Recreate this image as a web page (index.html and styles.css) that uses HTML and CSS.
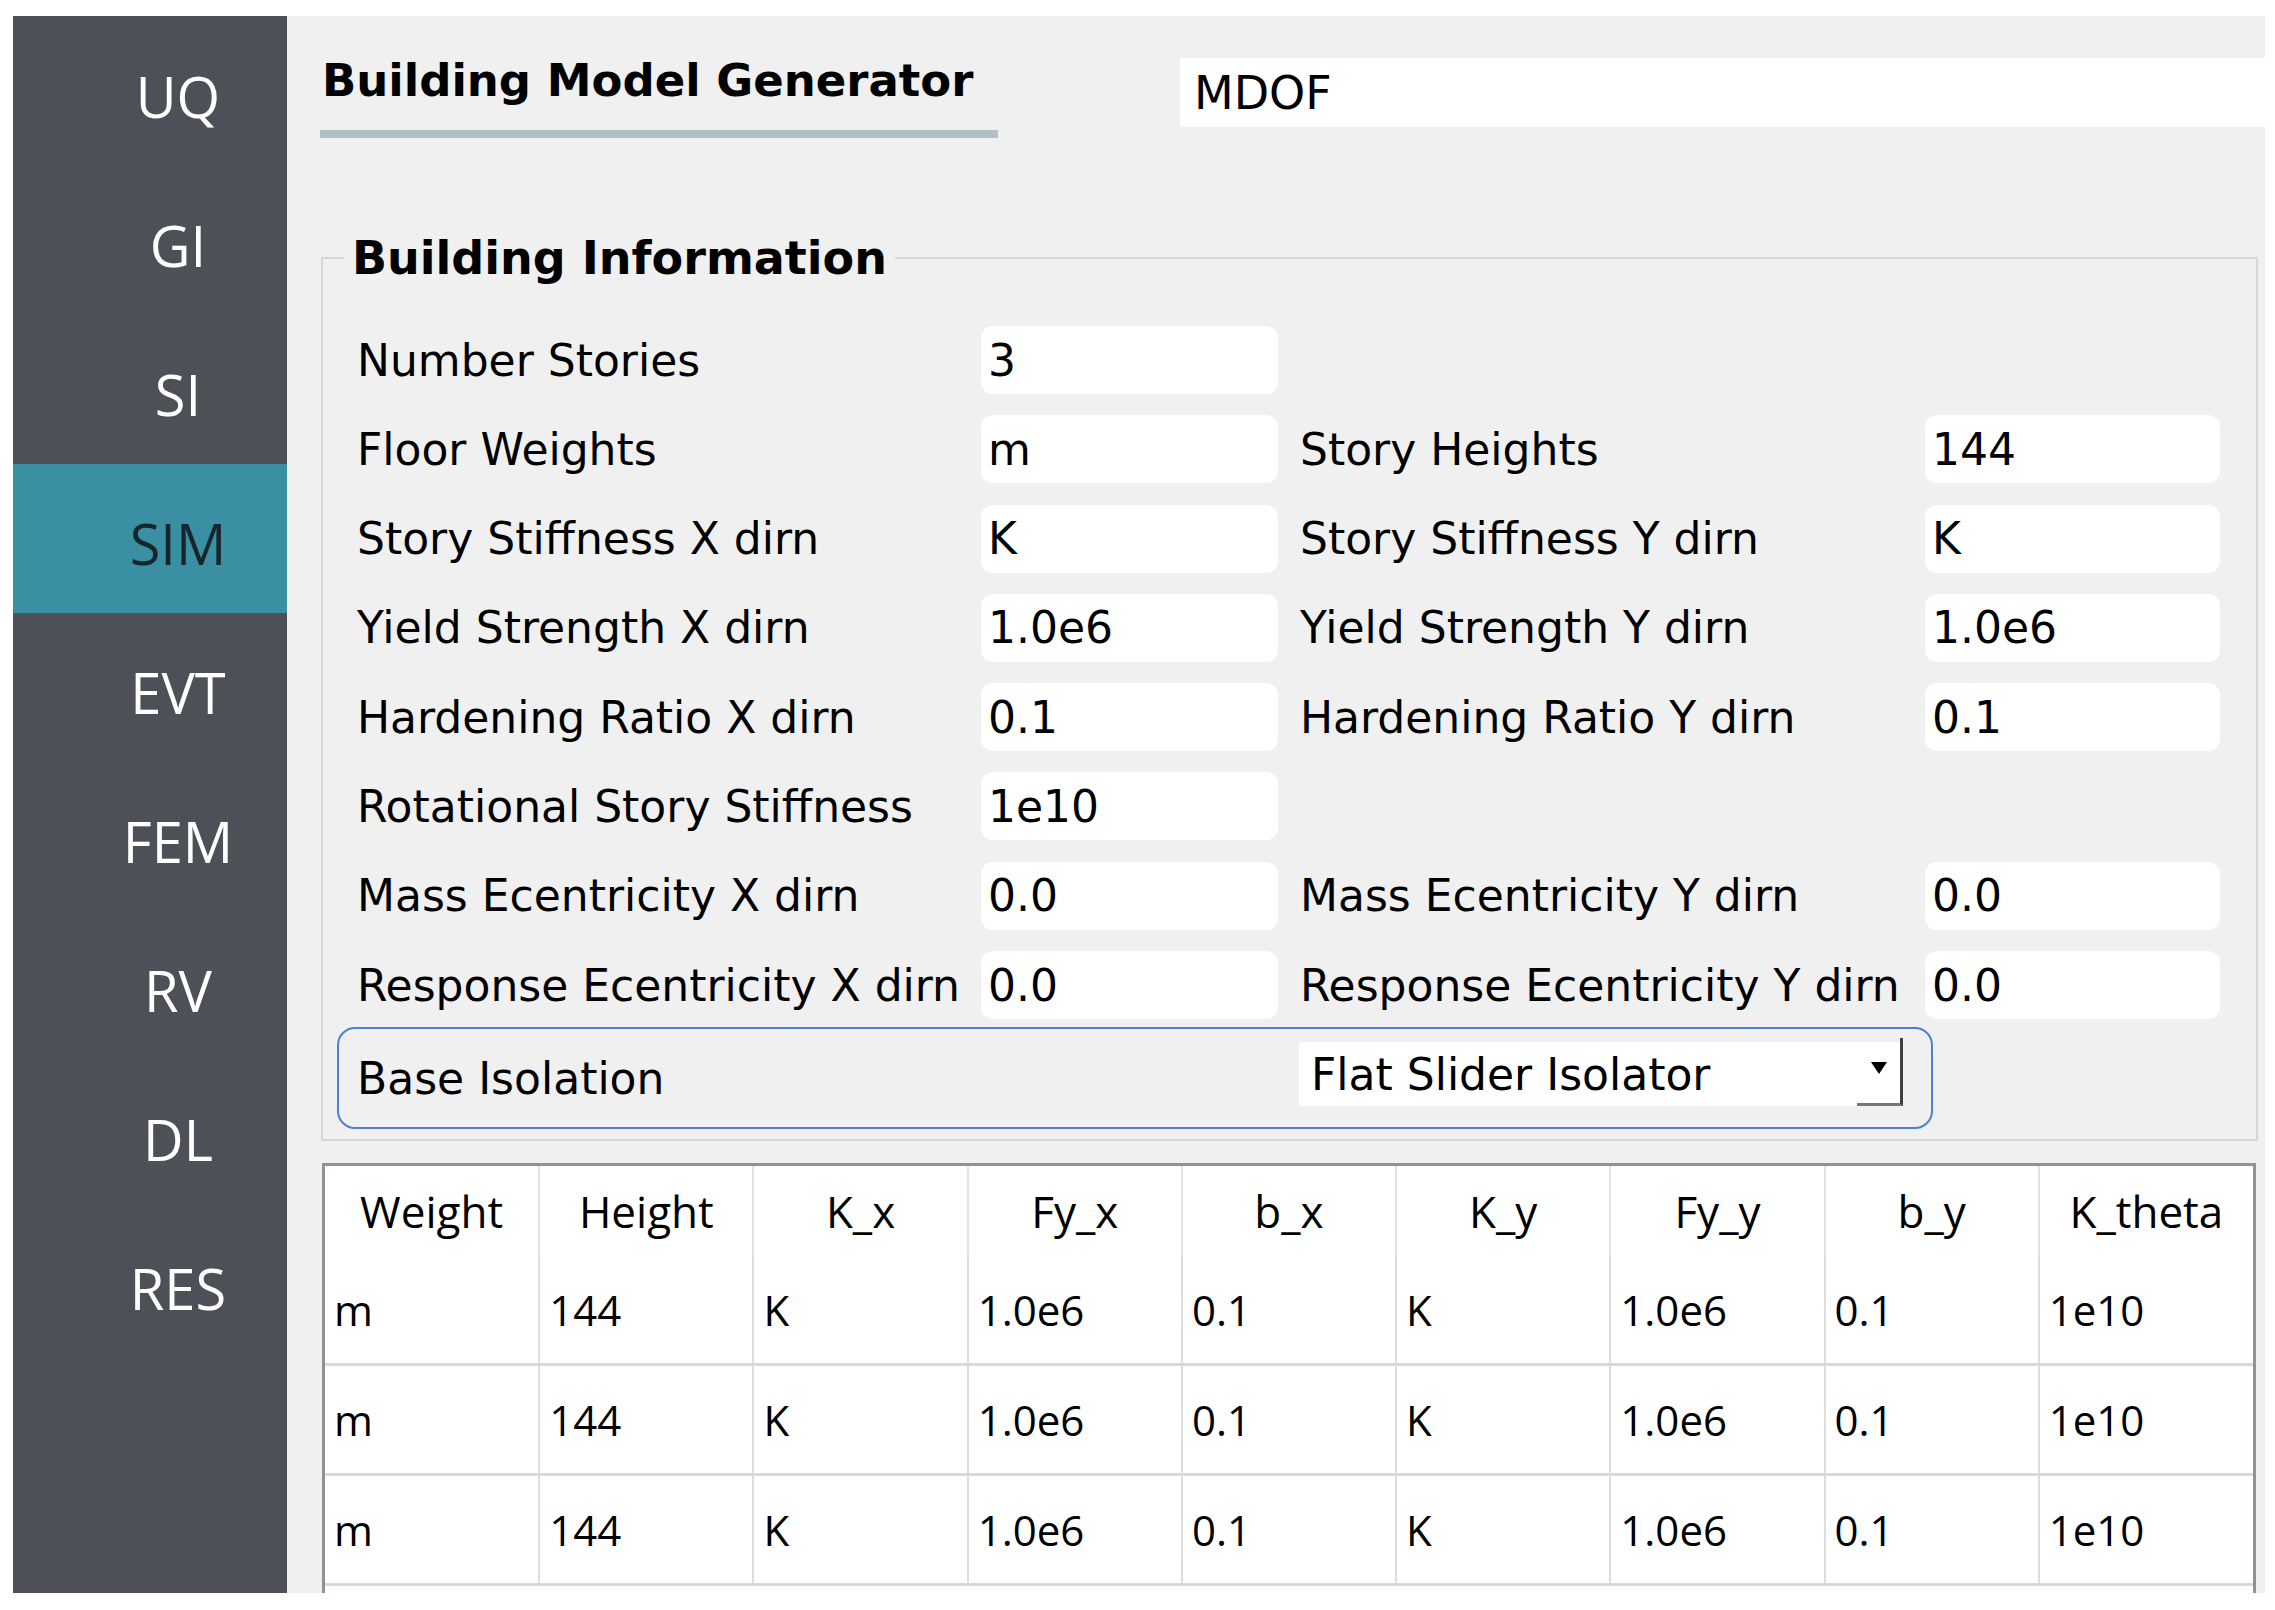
FILE: index.html
```html
<!DOCTYPE html>
<html lang="en">
<head>
<meta charset="utf-8">
<title>Building Model Generator</title>
<link rel="stylesheet" href="styles.css">
</head>
<body>
<div class="app">
  <nav class="sidebar">
    <div class="nav-item">UQ</div>
    <div class="nav-item">GI</div>
    <div class="nav-item">SI</div>
    <div class="nav-item active">SIM</div>
    <div class="nav-item">EVT</div>
    <div class="nav-item">FEM</div>
    <div class="nav-item">RV</div>
    <div class="nav-item">DL</div>
    <div class="nav-item">RES</div>
  </nav>
  <main class="main">
    <header class="top">
      <div class="title">Building Model Generator</div>
      <div class="selector">MDOF</div>
    </header>
    <fieldset class="group">
      <legend class="group-title">Building Information</legend>
      <div class="form">
        <span class="label">Number Stories</span><span class="field">3</span><span class="label right"></span><span></span>
        <span class="label">Floor Weights</span><span class="field">m</span><span class="label right">Story Heights</span><span class="field">144</span>
        <span class="label">Story Stiffness X dirn</span><span class="field">K</span><span class="label right">Story Stiffness Y dirn</span><span class="field">K</span>
        <span class="label">Yield Strength X dirn</span><span class="field">1.0e6</span><span class="label right">Yield Strength Y dirn</span><span class="field">1.0e6</span>
        <span class="label">Hardening Ratio X dirn</span><span class="field">0.1</span><span class="label right">Hardening Ratio Y dirn</span><span class="field">0.1</span>
        <span class="label">Rotational Story Stiffness</span><span class="field">1e10</span><span class="label right"></span><span></span>
        <span class="label">Mass Ecentricity X dirn</span><span class="field">0.0</span><span class="label right">Mass Ecentricity Y dirn</span><span class="field">0.0</span>
        <span class="label">Response Ecentricity X dirn</span><span class="field">0.0</span><span class="label right">Response Ecentricity Y dirn</span><span class="field">0.0</span>
      </div>
      <div class="iso">
        <span class="iso-label">Base Isolation</span>
        <div class="combo">
          <span class="combo-text">Flat Slider Isolator</span>
          <span class="drop"><span class="arrow"></span></span>
        </div>
      </div>
    </fieldset>
    <div class="table-wrap">
      <table class="grid">
        <thead>
          <tr><th>Weight</th><th>Height</th><th>K_x</th><th>Fy_x</th><th>b_x</th><th>K_y</th><th>Fy_y</th><th>b_y</th><th>K_theta</th></tr>
        </thead>
        <tbody>
          <tr><td>m</td><td>144</td><td>K</td><td>1.0e6</td><td>0.1</td><td>K</td><td>1.0e6</td><td>0.1</td><td>1e10</td></tr>
          <tr><td>m</td><td>144</td><td>K</td><td>1.0e6</td><td>0.1</td><td>K</td><td>1.0e6</td><td>0.1</td><td>1e10</td></tr>
          <tr><td>m</td><td>144</td><td>K</td><td>1.0e6</td><td>0.1</td><td>K</td><td>1.0e6</td><td>0.1</td><td>1e10</td></tr>
        </tbody>
      </table>
    </div>
  </main>
</div>
</body>
</html>
```

FILE: styles.css
```css
body {
  margin: 0;
  background: #ffffff;
}

.app {
  display: flex;
  margin: 16px 0 0 13px;
  width: 2252px;
  height: 1577px;
}

.sidebar {
  width: 274px;
  flex: none;
  background: #4d5157;
  display: flex;
  flex-direction: column;
  padding-top: 1px;
  box-sizing: border-box;
  font-family: "Open Sans", sans-serif;
}

.nav-item {
  height: 149px;
  flex: none;
  box-sizing: border-box;
  display: flex;
  align-items: center;
  justify-content: center;
  padding-left: 56px;
  padding-top: 8px;
  color: #ffffff;
  font-size: 56px;
}

.nav-item.active {
  background: #3b8fa3;
  color: #17262c;
}

.main {
  flex: 1;
  background: #f0f0f0;
  display: flex;
  flex-direction: column;
  overflow: hidden;
  padding-top: 41px;
  box-sizing: border-box;
  font-family: "DejaVu Sans", sans-serif;
  font-size: 44px;
  color: #000000;
}

.top {
  display: flex;
  align-items: flex-start;
  padding-left: 33px;
}

.title {
  width: 678px;
  flex: none;
  box-sizing: border-box;
  padding-left: 2px;
  padding-bottom: 25px;
  font-weight: bold;
  font-size: 45px;
  line-height: 48px;
  white-space: nowrap;
  border-bottom: 8px solid #b3bfc6;
}

.selector {
  flex: 1;
  margin-left: 182px;
  margin-top: 1px;
  height: 69px;
  background: #ffffff;
  padding-left: 14px;
  display: flex;
  align-items: center;
  font-size: 46px;
}

.group {
  margin: 96px 7px 0 34px;
  border: 2px solid #d6d6d6;
  padding: 0 36px 10px 34px;
  min-width: 0;
}

.group-title {
  margin-left: -13px;
  padding: 0 8px;
  font-weight: bold;
  font-size: 46px;
  line-height: 48px;
}

.form {
  margin-top: 44px;
  display: grid;
  grid-template-columns: 624px 297px 647px 295px;
  grid-auto-rows: 68px;
  row-gap: 21.3px;
}

.label {
  align-self: center;
  white-space: nowrap;
}

.label.right {
  padding-left: 22px;
}

.field {
  background: #ffffff;
  border-radius: 12px;
  padding-left: 7px;
  display: flex;
  align-items: center;
  white-space: nowrap;
}

.iso {
  margin: 8px 0 0 -20px;
  width: 1596px;
  height: 102px;
  box-sizing: border-box;
  border: 2px solid #4f7fd4;
  border-radius: 18px;
  display: flex;
  align-items: flex-start;
  padding: 0 30px 0 18px;
}

.iso-label {
  width: 942px;
  flex: none;
  align-self: center;
}

.combo {
  margin-top: 13px;
  width: 604px;
  height: 64px;
  flex: none;
  box-sizing: border-box;
  background: #ffffff;
  display: flex;
  align-items: center;
  justify-content: space-between;
  padding-left: 12px;
}

.drop {
  width: 46px;
  height: 68px;
  margin-top: -4px;
  box-sizing: border-box;
  border-right: 3px solid #3f3f3f;
  border-bottom: 3px solid #777777;
  display: flex;
  align-items: center;
  justify-content: center;
}

.arrow {
  width: 0;
  height: 0;
  margin-top: -6px;
  border-left: 8px solid transparent;
  border-right: 8px solid transparent;
  border-top: 12px solid #000000;
}

.table-wrap {
  margin: 22px 0 0 35px;
  width: 1934px;
  flex: 1;
  box-sizing: border-box;
  background: #ffffff;
  border-top: 3px solid #8d929b;
  border-left: 3px solid #8d929b;
  border-right: 3px solid #8d929b;
  font-family: "Open Sans", sans-serif;
  font-size: 44px;
}

.grid {
  width: 100%;
  border-collapse: collapse;
  table-layout: fixed;
}

.grid th {
  height: 90px;
  padding: 0;
  font-weight: normal;
  text-align: center;
  border-right: 2px solid #e2e2e2;
}

.grid td {
  height: 107px;
  padding: 0 0 0 9px;
  font-size: 42px;
  text-align: left;
  border-right: 2px solid #dedede;
  border-bottom: 3px solid #d9d9d9;
}

.grid th:last-child,
.grid td:last-child {
  border-right: none;
}
```
